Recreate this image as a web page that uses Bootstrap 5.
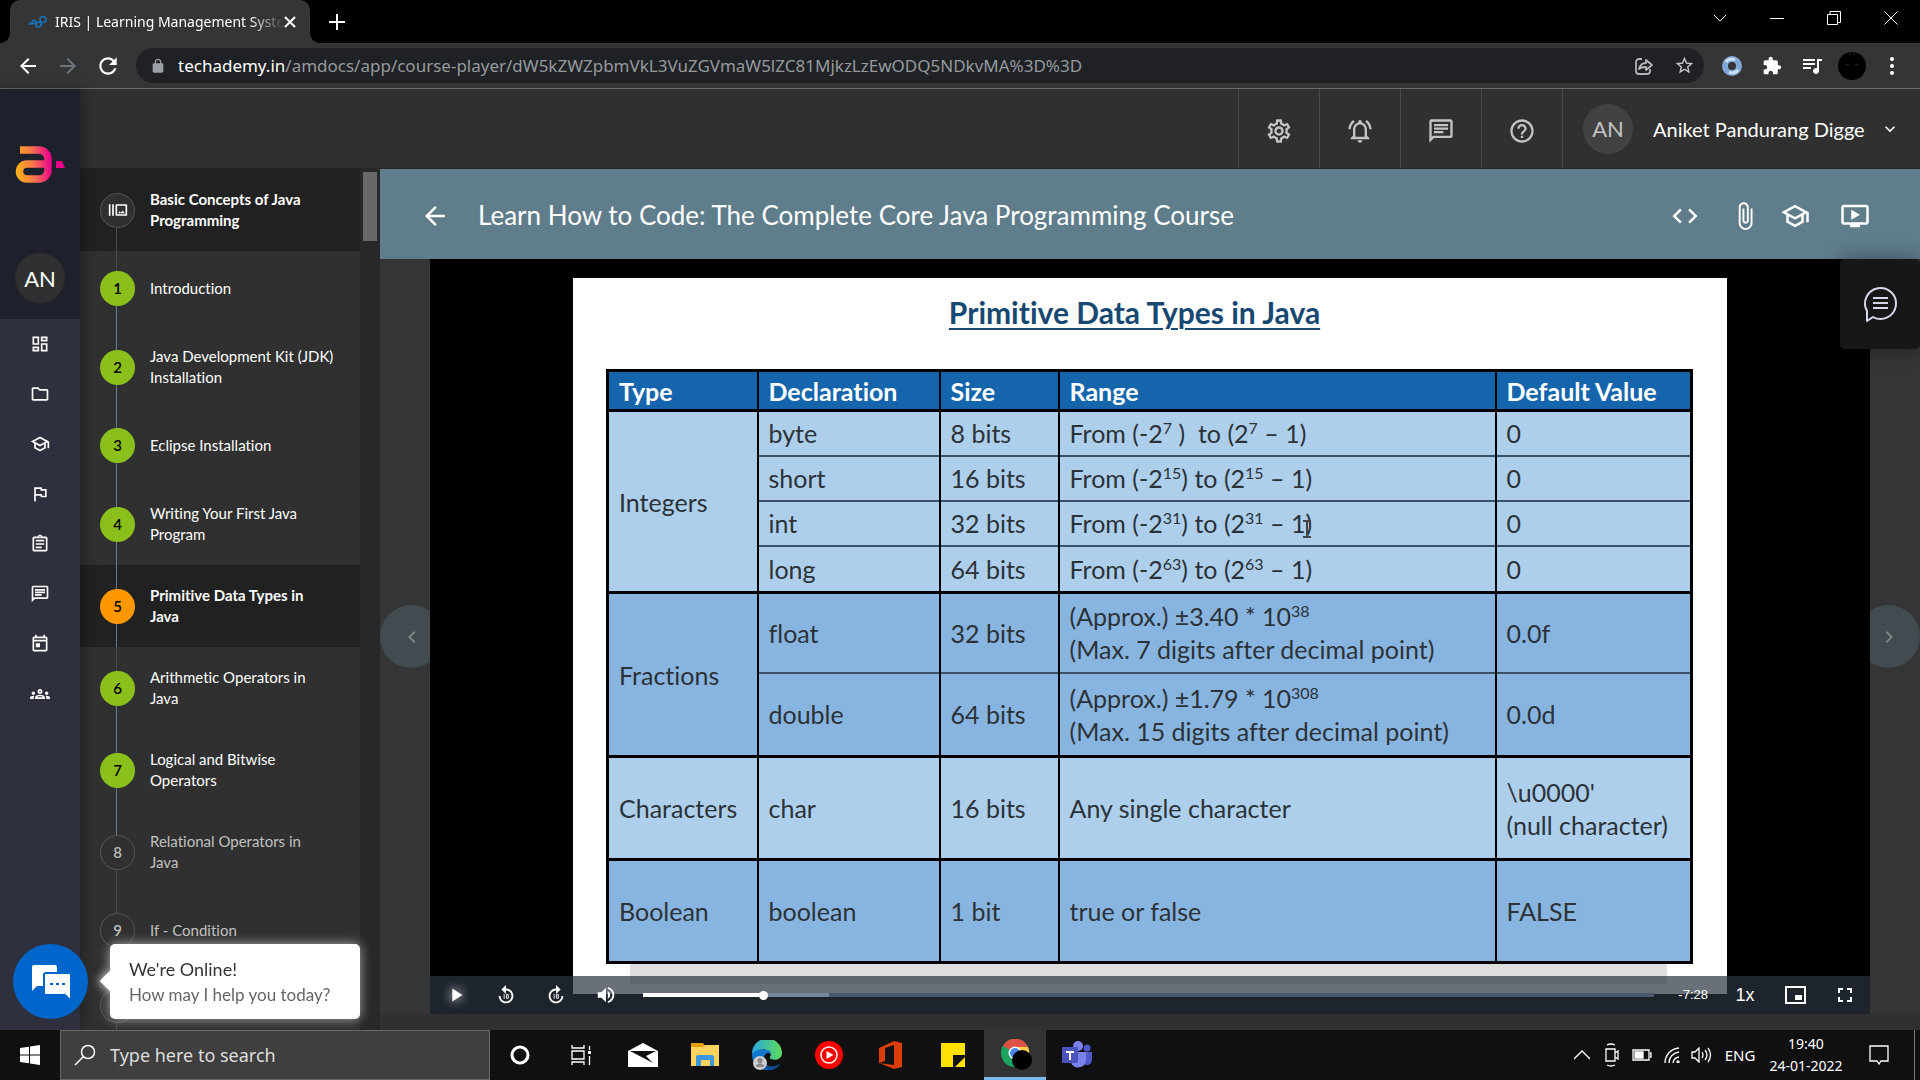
<!DOCTYPE html>
<html lang="en">
<head>
<meta charset="utf-8">
<meta name="viewport" content="width=device-width, initial-scale=1">
<title>IRIS | Learning Management System</title>
<link href="https://cdn.jsdelivr.net/npm/bootstrap@5.3.0/dist/css/bootstrap.min.css" rel="stylesheet">
<style>
  :root { --ui: Lato, "Noto Sans", sans-serif; --win: "Noto Sans", "Open Sans", sans-serif; --slate: #607d8b; --line: #4a4a4a; }
  body { font-family: var(--ui); font-variant-ligatures: none; background: #353535; color: #fff; overflow: hidden; }
  button { color: inherit; background: none; border: 0; padding: 0; font: inherit; }
  a { color: inherit; text-decoration: none; }
  svg { display: block; fill: currentColor; flex: none; }
  .i16 { width: 16px; height: 16px; } .i20 { width: 20px; height: 20px; }
  .i22 { width: 22px; height: 22px; } .i24 { width: 24px; height: 24px; } .i28 { width: 28px; height: 28px; } .i30 { width: 30px; height: 30px; }
  .stroked { fill: none; stroke: currentColor; }
  .cell { display: flex; align-items: center; justify-content: center; flex: none; }

  /* browser frame */
  .tabstrip { height: 43px; background: #000; font-family: var(--win); padding-right: 1px; }
  .browser-tab { position: relative; width: 300px; height: 43px; margin-left: 10px; padding: 0 14px 0 18px; background: #353535; border-radius: 10px 10px 0 0; font-size: 14px; }
  .browser-tab::before, .browser-tab::after { content: ""; position: absolute; bottom: 0; width: 10px; height: 10px; }
  .browser-tab::before { left: -10px; background: radial-gradient(circle at 0 0, transparent 10px, #353535 10px); }
  .browser-tab::after { right: -10px; background: radial-gradient(circle at 100% 0, transparent 10px, #353535 10px); }
  .tab-name { flex: 1; min-width: 0; white-space: nowrap; -webkit-mask-image: linear-gradient(90deg, #000 85%, transparent); mask-image: linear-gradient(90deg, #000 85%, transparent); }
  .winbtn { width: 57px; height: 36px; }
  .newtab { width: 38px; height: 43px; }
  .toolbar { height: 46px; background: #353535; border-bottom: 1px solid #6a6a6a; font-family: var(--win); }
  .toolbar .cell { width: 40px; height: 40px; }
  .address { height: 35px; background: #202124; border-radius: 18px; font-size: 17px; padding-left: 14px; }
  .address input { background: none; border: 0; padding: 0; color: #969a9e; outline: 0; min-width: 0; }

  /* icon rail */
  .rail { width: 80px; background: #2e303d; z-index: 3; box-shadow: 3px 0 12px rgba(0,0,0,.3); }
  .rail-top { height: 230px; background: #1e212b; padding-top: 56px; }
  .initials { width: 50px; height: 50px; border-radius: 50%; font-size: 22px; background: #303030; }
  .rail .cell { height: 50px; }

  /* header */
  .apphead { height: 80px; background: #303030; border-bottom: 1px solid #252525; color: #c4c4c4; }
  .apphead .cell { width: 81px; border-left: 1px solid #4a4a4a; padding-top: 4px; }
  .account { width: 358px; border-left: 1px solid #4a4a4a; padding: 0 20px; }
  .account .initials { background: #424242; }

  /* lessons */
  .lessons { width: 280px; background: #303030; overflow: hidden; font-size: 15px; line-height: 21px; }
  .lesson { position: relative; display: flex; align-items: center; gap: 15px; min-height: 75px; padding: 20px 20px; --up: var(--slate); --down: var(--slate); }
  .lesson::before, .lesson::after { content: ""; position: absolute; left: 36px; width: 1px; height: 50%; }
  .lesson::before { top: 0; background: var(--up); }
  .lesson::after { bottom: 0; background: var(--down); }
  .lesson.current { background: #212121; font-weight: 700; }
  .lesson.todo { color: #c0c0c0; }
  .grey-up { --up: var(--line) !important; } .grey-down { --down: var(--line) !important; } .no-up { --up: transparent !important; }
  .bullet { position: relative; z-index: 1; flex: none; width: 35px; height: 35px; border-radius: 50%; background: #8bc01c; color: #000; font-weight: 600; display: flex; align-items: center; justify-content: center; }
  .bullet.open { background: #303030; border: 1px solid #555; color: #bbb; }
  .bullet.now { background: #ff9800; }
  .scroller { width: 20px; background: #282828; padding: 3px; }
  .scroller div { height: 69px; background: #686868; }

  /* player */
  .coursebar { height: 90px; background: var(--slate); padding: 3px 40px 0; }
  .coursebar h1 { font-size: 26px; font-weight: 400; margin: 0; }
  .coursebar .cell { width: 50px; height: 50px; }
  .coursebar .apart { margin-right: 10px; }
  .stage { position: relative; padding: 0 50px; background: #353535; }
  .pager { position: absolute; top: 346px; width: 63px; height: 63px; border-radius: 50%; background: #424b50; color: #7d8284; }
  .pager.prev { left: 0; } .pager.next { right: 0; }
  .video { position: relative; z-index: 1; height: 755px; background: #000; padding: 19px 143px 0; }
  .slide { position: relative; height: 716px; background: #fff; padding: 11px 34px 0 33px; overflow: hidden; }
  .slide h2 { margin: 0 0 34px; padding-right: 30px; text-align: center; font-size: 30px; line-height: 46px; font-weight: 700; color: #174872; text-decoration: underline; text-decoration-thickness: 2px; text-underline-offset: 4px; }
  .types { width: 100%; table-layout: fixed; border-collapse: collapse; border: 3px solid #000; font-size: 25px; line-height: 33px; color: #2b3238; }
  .types th, .types td { padding: 1px 0 0 10px; border-left: 2px solid #000; border-top: 2px solid #3b5266; white-space: nowrap; vertical-align: middle; }
  .types thead { background: #1565ad; color: #fff; }
  .types th { font-weight: 700; }
  .types tbody { border-top: 3px solid #000; }
  .types tbody tr:first-child > * { border-top: 3px solid #000; }
  .types tbody th { font-weight: 400; }
  .pale { background: #aecfeb; } .deep { background: #88b5e0; }
  .types sup { font-size: 16px; line-height: 0; top: -9px; vertical-align: baseline; }
  .h40 { height: 40px; } .h45 { height: 45px; } .h47 { height: 47px; } .h80 { height: 80px; } .h84 { height: 84px; } .h103 { height: 103px; }
  .understrip { margin: 0 26px 0 24px; height: 20px; background: #dedede; }
  .ibeam { position: absolute; left: 729px; top: 242px; width: 10px; height: 18px; color: #444; }
  .note { position: absolute; z-index: 2; right: 0; top: 0; width: 80px; height: 90px; background: #171717; border-radius: 5px; box-shadow: 0 0 20px rgba(0,0,0,.4); color: #d5d7ea; }
  .controls { position: absolute; left: 0; right: 0; bottom: 0; height: 38px; background: rgba(43,51,63,.7); padding: 0 0 0 1px; font-family: "Liberation Sans", sans-serif; }
  .controls .cell { width: 50px; height: 38px; }
  .controls .remaining { font-size: 13px; margin-right: 12px; }
  .controls .speed { font-size: 18px; }
  .seek { appearance: none; -webkit-appearance: none; flex: 1; min-width: 0; height: 4px; margin: 0 24px 0 12px; outline: 0;
    background: linear-gradient(90deg, #fff var(--played), #73859f var(--played), #73859f var(--loaded), #4b5970 var(--loaded)); }
  .seek::-webkit-slider-thumb { -webkit-appearance: none; width: 9px; height: 9px; border-radius: 50%; background: #fff; }
  .glow { filter: drop-shadow(0 0 6px #fff); }
  .footgap { background: #303030; }

  /* chat widget */
  .chat { position: fixed; left: 13px; bottom: 61px; z-index: 5; gap: 22px; }
  .chat-btn { width: 75px; height: 75px; border-radius: 50%; background: #0066cc; }
  .chat-msg { position: relative; width: 250px; height: 75px; padding: 0 19px; background: #fff; border-radius: 5px; box-shadow: 0 0 12px rgba(255,255,255,.6); color: #333; font-size: 18px; line-height: 25px; }
  .chat-msg::before { content: ""; position: absolute; left: -7px; top: 29px; width: 16px; height: 16px; background: #fff; transform: rotate(45deg); box-shadow: -2px 2px 8px rgba(255,255,255,.6); z-index: -1; }
  .chat-msg div + div { font-size: 17px; color: #666; }

  /* taskbar */
  .taskbar { height: 50px; background: #101010; font-family: var(--win); font-size: 15px; position: relative; z-index: 6; }
  .find { width: 430px; background: #3f3f3f; border: 1px solid #686868; padding-left: 13px; gap: 14px; }
  .find input { flex: 1; min-width: 0; background: none; border: 0; outline: 0; color: #ddd; font-size: 18px; padding: 0; }
  .find input::placeholder { color: #ddd; opacity: 1; }
  .taskbar .cell { width: 62px; height: 50px; }
  .taskbar .cell.launch { width: 60px; }
  .taskbar .cell.active { background: #333; border-bottom: 3px solid #76b9ed; padding: 3px 0 0 4px; }
  .taskbar .tray .cell { width: 30px; }
  .taskbar .tray .lang { width: 46px; }
  .taskbar .tray .alerts { width: 60px; margin-right: 5px; }
  .clock { font-size: 14px; line-height: 22px; width: 86px; text-align: center; }
  .peek { width: 6px; border-left: 1px solid #777; }
</style>
</head>
<body class="vh-100 d-flex flex-column">

<svg width="0" height="0" class="position-absolute" aria-hidden="true"><defs>
  <symbol id="back" viewBox="0 0 24 24"><path d="M20 11H7.83l5.59-5.59L12 4l-8 8 8 8 1.41-1.41L7.83 13H20v-2z"/></symbol>
  <symbol id="chat" viewBox="0 0 24 24"><path d="M4 4h16v12H5.17L4 17.17V4m0-2c-1.1 0-1.99.9-1.99 2L2 22l4-4h14c1.1 0 2-.9 2-2V4c0-1.1-.9-2-2-2H4zm2 10h8v2H6v-2zm0-3h12v2H6V9zm0-3h12v2H6V6z"/></symbol>
  <symbol id="school" viewBox="0 0 24 24"><path d="M12 3L1 9l4 2.18v6L12 21l7-3.82v-6l2-1.09V17h2V9L12 3zm6.82 6L12 12.72 5.18 9 12 5.28 18.82 9zM17 15.99l-5 2.73-5-2.73v-3.72L12 15l5-2.73v3.72z"/></symbol>
</defs></svg>

<!-- Tab strip -->
<div class="tabstrip d-flex flex-shrink-0 align-items-start">
  <div class="browser-tab d-flex align-items-center">
    <svg class="stroked me-2" width="19" height="14" viewBox="0 0 19 14" style="color:#1a73b8" stroke-width="1.500"><path d="M0 9h3l1-2"/><circle cx="6" cy="7" r="1.800"/><circle cx="10.500" cy="9.500" r="2.500"/><circle cx="15" cy="4.500" r="3"/></svg>
    <span class="tab-name">IRIS | Learning Management Syste</span>
    <button aria-label="Close tab"><svg class="stroked" width="12" height="12" viewBox="0 0 12 12" stroke-width="2"><path d="M1 1l10 10M11 1 1 11"/></svg></button>
  </div>
  <button class="cell newtab ms-2" aria-label="New tab"><svg class="stroked i16" viewBox="0 0 16 16" stroke-width="2"><path d="M8 0v16M0 8h16"/></svg></button>
  <div class="ms-auto d-flex">
    <button class="winbtn cell" aria-label="Search tabs"><svg class="stroked" width="14" height="8" viewBox="0 0 14 8"><path d="M1 1l6 6 6-6"/></svg></button>
    <button class="winbtn cell" aria-label="Minimise"><svg class="stroked" width="14" height="14" viewBox="0 0 14 14" stroke-width="1"><path d="M0 7.500h14"/></svg></button>
    <button class="winbtn cell" aria-label="Restore"><svg class="stroked" width="14" height="14" viewBox="0 0 14 14"><path d="M.5 3.500h10v10H.5zM3 3.500V.5h10.500v11H11"/></svg></button>
    <button class="winbtn cell" aria-label="Close"><svg class="stroked" width="14" height="14" viewBox="0 0 14 14"><path d="M.5.5l13 13M13.500.5l-13 13"/></svg></button>
  </div>
</div>

<!-- Toolbar -->
<div class="toolbar d-flex flex-shrink-0 align-items-center ps-2 pe-2">
  <button class="cell" aria-label="Back"><svg class="i24"><use href="#back"/></svg></button>
  <button class="cell text-secondary" aria-label="Forward"><svg class="i24" viewBox="0 0 24 24"><path d="M12 4l-1.410 1.410L16.170 11H4v2h12.170l-5.580 5.590L12 20l8-8z"/></svg></button>
  <button class="cell" aria-label="Reload"><svg width="26" height="26" viewBox="0 0 24 24"><path d="M17.65 6.35C16.2 4.9 14.21 4 12 4c-4.42 0-7.99 3.58-7.99 8s3.57 8 7.99 8c3.73 0 6.84-2.55 7.73-6h-2.080c-.82 2.33-3.04 4-5.650 4-3.31 0-6-2.690-6-6s2.690-6 6-6c1.660 0 3.140.69 4.220 1.780L13 11h7V4l-2.350 2.350z"/></svg></button>
  <div class="address d-flex flex-fill align-items-center ms-2 me-2">
    <svg class="i16 me-2" style="color:#9aa0a6" viewBox="0 0 24 24"><path d="M18 8h-1V6c0-2.760-2.240-5-5-5S7 3.240 7 6v2H6c-1.100 0-2 .9-2 2v10c0 1.100.9 2 2 2h12c1.100 0 2-.9 2-2V10c0-1.100-.9-2-2-2zM9 6c0-1.660 1.340-3 3-3s3 1.340 3 3v2H9z"/></svg>
    <label for="url" class="ms-1">techademy.in</label><input id="url" class="flex-fill" value="/amdocs/app/course-player/dW5kZWZpbmVkL3VuZGVmaW5lZC81MjkzLzEwODQ5NDkvMA%3D%3D">
    <button class="cell" style="color:#b4b6b8" aria-label="Share"><svg class="stroked i20" viewBox="0 0 20 20" stroke-width="1.800"><path d="M8 3H5a3 3 0 0 0-3 3v9a3 3 0 0 0 3 3h8a3 3 0 0 0 3-3v-2"/><path d="M5 13c1-4 3-6 7-6V4l6 5-6 5v-3c-3 0-5 0-7 2z" stroke-linejoin="round"/></svg></button>
    <button class="cell" style="color:#c4c6c8" aria-label="Bookmark"><svg width="21" height="21" viewBox="0 0 24 24"><path d="M22 9.240l-7.190-.62L12 2 9.190 8.630 2 9.240l5.460 4.730L5.820 21 12 17.270 18.180 21l-1.630-7.030L22 9.240zM12 15.400l-3.760 2.270 1-4.280-3.320-2.880 4.380-.38L12 6.100l1.710 4.040 4.380.38-3.320 2.880 1 4.280L12 15.400z"/></svg></button>
  </div>
  <button class="cell" aria-label="Extension"><svg class="i20" viewBox="0 0 20 20"><circle cx="10" cy="10" r="7" fill="none" stroke="#7fa8d8" stroke-width="6"/><path d="M4 6a7 7 0 0 1 9-2M16 14a7 7 0 0 1-9 2" fill="none" stroke="#cfe2f5" stroke-width="3"/></svg></button>
  <button class="cell" aria-label="Extensions"><svg class="i20" viewBox="0 0 24 24"><path d="M20.500 11H19V7c0-1.100-.9-2-2-2h-4V3.500C13 2.120 11.880 1 10.500 1S8 2.120 8 3.500V5H4c-1.100 0-1.990.9-1.990 2v3.800H3.500c1.490 0 2.700 1.210 2.700 2.700s-1.210 2.700-2.700 2.700H2V20c0 1.100.9 2 2 2h3.800v-1.500c0-1.490 1.210-2.700 2.700-2.700 1.490 0 2.700 1.210 2.700 2.700V22H17c1.100 0 2-.9 2-2v-4h1.500c1.380 0 2.500-1.120 2.500-2.500S21.880 11 20.500 11z"/></svg></button>
  <button class="cell" aria-label="Media"><svg class="i24" viewBox="0 0 24 24"><path d="M15 5H3v2h12V5zm0 4H3v2h12V9zM3 15h8v-2H3v2zM17 5v9.180c-.31-.11-.65-.18-1-.18-1.660 0-3 1.340-3 3s1.340 3 3 3 3-1.340 3-3V7h3V5h-5z"/></svg></button>
  <button class="cell" aria-label="Profile"><svg class="i28" viewBox="0 0 28 28"><circle cx="14" cy="14" r="14" fill="#000"/><path d="M8 13l3-1M20 13l-3-1M11 3l2-2M17 3l-2-2" stroke="#222"/></svg></button>
  <button class="cell" aria-label="Menu"><svg width="4" height="18" viewBox="0 0 4 18"><circle cx="2" cy="2" r="2"/><circle cx="2" cy="9" r="2"/><circle cx="2" cy="16" r="2"/></svg></button>
</div>

<div class="d-flex flex-fill" style="min-height:0">
  <!-- Icon rail -->
  <nav class="rail flex-shrink-0 d-flex flex-column" aria-label="Main">
    <div class="rail-top d-flex flex-column align-items-center">
      <svg width="50" height="38" viewBox="0 0 50 38"><defs><linearGradient id="amd" gradientUnits="userSpaceOnUse" x1="0" x2="36" y1="20" y2="16"><stop offset="0" stop-color="#fdb515"/><stop offset=".5" stop-color="#f7744f"/><stop offset="1" stop-color="#ec008c"/></linearGradient></defs>
        <path fill="none" stroke="url(#amd)" stroke-width="7.500" d="M5 5h19a9 9 0 0 1 9 9v11a9 9 0 0 1-9 9H12a7.500 7.500 0 0 1 0-15h20"/><path fill="#ec008c" d="M41 16h6l3 7h-9z"/></svg>
      <div class="initials cell mt-auto mb-3">AN</div>
    </div>
    <a class="cell" href="#" aria-label="Dashboard"><svg class="i20" viewBox="0 0 24 24"><path d="M19 5v2h-4V5h4M9 5v6H5V5h4m10 8v6h-4v-6h4M9 17v2H5v-2h4M21 3h-8v6h8V3zM11 3H3v10h8V3zm10 8h-8v10h8V11zm-10 4H3v6h8v-6z"/></svg></a>
    <a class="cell" href="#" aria-label="Folders"><svg class="i20" viewBox="0 0 24 24"><path d="M9.170 6l2 2H20v10H4V6h5.170M10 4H4c-1.100 0-1.990.9-1.990 2L2 18c0 1.100.9 2 2 2h16c1.100 0 2-.9 2-2V8c0-1.100-.9-2-2-2h-8l-2-2z"/></svg></a>
    <a class="cell" href="#" aria-label="Courses"><svg class="i20"><use href="#school"/></svg></a>
    <a class="cell" href="#" aria-label="Goals"><svg class="i20" viewBox="0 0 24 24"><path d="M12.360 6l.4 2H18v6h-3.360l-.4-2H7V6h5.360M14 4H5v17h2v-7h5.600l.4 2h7V6h-5.600L14 4z"/></svg></a>
    <a class="cell" href="#" aria-label="Assignments"><svg class="i20" viewBox="0 0 24 24"><path d="M7 15h7v2H7zm0-4h10v2H7zm0-4h10v2H7zm12-4h-4.180C14.400 1.840 13.300 1 12 1c-1.300 0-2.400.84-2.820 2H5c-1.100 0-2 .9-2 2v14c0 1.100.9 2 2 2h14c1.100 0 2-.9 2-2V5c0-1.100-.9-2-2-2zm-7-.25c.41 0 .75.34.75.75s-.34.75-.75.75-.75-.34-.75-.75.34-.75.75-.75zM19 19H5V5h14v14z"/></svg></a>
    <a class="cell" href="#" aria-label="Discussions"><svg class="i20"><use href="#chat"/></svg></a>
    <a class="cell" href="#" aria-label="Calendar"><svg class="i20" viewBox="0 0 24 24"><path d="M19 3h-1V1h-2v2H8V1H6v2H5c-1.110 0-1.990.9-1.990 2L3 19c0 1.100.89 2 2 2h14c1.100 0 2-.9 2-2V5c0-1.100-.9-2-2-2zm0 16H5V9h14v10zm0-12H5V5h14v2zM7 11h5v5H7z"/></svg></a>
    <a class="cell" href="#" aria-label="Groups"><svg class="i20" viewBox="0 0 24 24"><path d="M4 13c1.100 0 2-.9 2-2s-.9-2-2-2-2 .9-2 2 .9 2 2 2zm1.130 1.100c-.37-.06-.74-.1-1.130-.1-.99 0-1.930.21-2.780.58C.48 14.900 0 15.620 0 16.430V18h4.500v-1.610c0-.83.23-1.610.63-2.290zM20 13c1.100 0 2-.9 2-2s-.9-2-2-2-2 .9-2 2 .9 2 2 2zm4 3.430c0-.81-.48-1.530-1.220-1.850-.85-.37-1.790-.58-2.780-.58-.39 0-.76.04-1.130.1.4.68.63 1.460.63 2.290V18H24v-1.570zm-7.760-2.780c-1.170-.52-2.610-.9-4.240-.9-1.630 0-3.070.39-4.240.9C6.680 14.130 6 15.210 6 16.390V18h12v-1.610c0-1.180-.68-2.260-1.760-2.740zM8.070 16c.09-.23.13-.39.91-.69.97-.38 1.990-.56 3.020-.56s2.050.18 3.020.56c.77.3.81.46.91.69H8.070zM12 8c.55 0 1 .45 1 1s-.45 1-1 1-1-.45-1-1 .45-1 1-1m0-2c-1.660 0-3 1.340-3 3s1.340 3 3 3 3-1.340 3-3-1.340-3-3-3z"/></svg></a>
  </nav>

  <div class="flex-fill d-flex flex-column" style="min-width:0">
    <!-- Header -->
    <header class="apphead d-flex flex-shrink-0 justify-content-end">
      <button class="cell" aria-label="Settings"><svg class="i28" viewBox="0 0 24 24"><path d="M19.430 12.980c.04-.32.07-.64.07-.98 0-.34-.03-.66-.07-.98l2.110-1.650c.19-.15.24-.42.12-.64l-2-3.460c-.09-.16-.26-.25-.44-.25-.06 0-.12.01-.17.03l-2.490 1c-.52-.4-1.080-.73-1.690-.98l-.38-2.650C14.460 2.180 14.250 2 14 2h-4c-.25 0-.46.18-.49.42l-.38 2.650c-.61.25-1.170.59-1.690.98l-2.490-1c-.06-.02-.12-.03-.18-.03-.17 0-.34.09-.43.25l-2 3.460c-.13.22-.07.49.12.64l2.110 1.650c-.04.32-.07.65-.07.98 0 .33.03.66.07.98l-2.110 1.650c-.19.15-.24.42-.12.64l2 3.460c.09.16.26.25.44.25.06 0 .12-.01.17-.03l2.490-1c.52.4 1.080.73 1.690.98l.38 2.650c.03.24.24.42.49.42h4c.25 0 .46-.18.49-.42l.38-2.650c.61-.25 1.170-.59 1.690-.98l2.490 1c.06.02.12.03.18.03.17 0 .34-.09.43-.25l2-3.460c.12-.22.07-.49-.12-.64l-2.110-1.650zm-1.980-1.710c.04.31.05.52.05.73 0 .21-.02.43-.05.73l-.14 1.130.89.7 1.080.84-.7 1.210-1.270-.51-1.040-.42-.9.68c-.43.32-.84.56-1.250.73l-1.060.43-.16 1.130-.2 1.350h-1.400l-.19-1.350-.16-1.130-1.060-.43c-.43-.18-.83-.41-1.230-.71l-.91-.7-1.060.43-1.270.51-.7-1.210 1.080-.84.89-.7-.14-1.130c-.03-.31-.05-.54-.05-.74s.02-.43.05-.73l.14-1.130-.89-.7-1.080-.84.7-1.210 1.270.51 1.040.42.9-.68c.43-.32.84-.56 1.250-.73l1.060-.43.16-1.130.2-1.350h1.390l.19 1.350.16 1.130 1.060.43c.43.18.83.41 1.230.71l.91.7 1.060-.43 1.270-.51.7 1.210-1.070.85-.89.7.14 1.130zM12 8c-2.210 0-4 1.790-4 4s1.790 4 4 4 4-1.790 4-4-1.790-4-4-4zm0 6c-1.100 0-2-.9-2-2s.9-2 2-2 2 .9 2 2-.9 2-2 2z"/></svg></button>
      <button class="cell" aria-label="Notifications"><svg class="i28" viewBox="0 0 24 24"><path d="M12 22c1.100 0 2-.9 2-2h-4c0 1.100.9 2 2 2zm6-6v-5c0-3.070-1.630-5.640-4.500-6.320V4c0-.83-.67-1.500-1.500-1.500s-1.500.67-1.500 1.500v.68C7.640 5.360 6 7.920 6 11v5l-2 2v1h16v-1l-2-2zm-2 1H8v-6c0-2.480 1.510-4.500 4-4.500s4 2.020 4 4.500v6zM7.580 4.080L6.150 2.650C3.750 4.480 2.170 7.300 2.030 10.500h2c.15-2.650 1.510-4.970 3.550-6.420zm12.390 6.420h2c-.15-3.200-1.730-6.020-4.120-7.850l-1.420 1.430c2.020 1.450 3.390 3.770 3.540 6.420z"/></svg></button>
      <button class="cell" aria-label="Messages"><svg class="i28"><use href="#chat"/></svg></button>
      <button class="cell" aria-label="Help"><svg class="i28" viewBox="0 0 24 24"><path d="M11 18h2v-2h-2v2zm1-16C6.480 2 2 6.480 2 12s4.480 10 10 10 10-4.480 10-10S17.520 2 12 2zm0 18c-4.410 0-8-3.590-8-8s3.590-8 8-8 8 3.590 8 8-3.590 8-8 8zm0-14c-2.210 0-4 1.790-4 4h2c0-1.100.9-2 2-2s2 .9 2 2c0 2-3 1.750-3 5h2c0-2.250 3-2.500 3-5 0-2.210-1.790-4-4-4z"/></svg></button>
      <button class="account d-flex align-items-center">
        <span class="initials d-flex align-items-center justify-content-center">AN</span>
        <span class="ms-3 ps-1 fs-5 text-white flex-fill text-start">Aniket Pandurang Digge</span>
        <svg class="i20 text-white" viewBox="0 0 24 24"><path d="M16.590 8.590L12 13.170 7.410 8.590 6 10l6 6 6-6z"/></svg>
      </button>
    </header>

    <div class="flex-fill d-flex" style="min-height:0">
      <!-- Lessons -->
      <div class="lessons flex-shrink-0">
        <a href="#" class="lesson current no-up grey-down"><span class="bullet open"><svg class="i20 text-white" viewBox="0 0 24 24"><path d="M1 5h2v14H1zm4 0h2v14H5zm17 0H10c-.55 0-1 .45-1 1v12c0 .55.45 1 1 1h12c.55 0 1-.45 1-1V6c0-.55-.45-1-1-1zm-1 12H11V7h10v10zM12 16l2-2.500 1.500 1.700 2-2.700 2.700 3.500z"/></svg></span><span>Basic Concepts of Java Programming</span></a>
        <a href="#" class="lesson grey-up"><span class="bullet">1</span><span>Introduction</span></a>
        <a href="#" class="lesson"><span class="bullet">2</span><span>Java Development Kit (JDK) Installation</span></a>
        <a href="#" class="lesson"><span class="bullet">3</span><span>Eclipse Installation</span></a>
        <a href="#" class="lesson"><span class="bullet">4</span><span>Writing Your First Java Program</span></a>
        <a href="#" class="lesson current"><span class="bullet now">5</span><span>Primitive Data Types in<br>Java</span></a>
        <a href="#" class="lesson grey-up"><span class="bullet">6</span><span>Arithmetic Operators in<br>Java</span></a>
        <a href="#" class="lesson"><span class="bullet">7</span><span>Logical and Bitwise Operators</span></a>
        <a href="#" class="lesson todo grey-down"><span class="bullet open">8</span><span>Relational Operators in<br>Java</span></a>
        <a href="#" class="lesson todo grey-up grey-down"><span class="bullet open">9</span><span>If - Condition</span></a>
        <a href="#" class="lesson todo grey-up grey-down" aria-label="Lesson 10"><span class="bullet open"></span></a>
      </div>
      <div class="scroller flex-shrink-0"><div></div></div>

      <!-- Player -->
      <main class="flex-fill d-flex flex-column" style="min-width:0">
        <div class="coursebar d-flex align-items-center flex-shrink-0">
          <a href="#" class="me-4 pe-1" aria-label="Back to course"><svg class="i30"><use href="#back"/></svg></a>
          <h1 class="flex-fill">Learn How to Code: The Complete Core Java Programming Course</h1>
          <button class="cell apart" aria-label="Code"><svg class="i30" viewBox="0 0 24 24"><path d="M9.400 16.600L4.800 12l4.600-4.600L8 6l-6 6 6 6 1.400-1.400zm5.200 0l4.600-4.600-4.600-4.600L16 6l6 6-6 6-1.400-1.400z"/></svg></button>
          <button class="cell" aria-label="Attachments"><svg class="i30" viewBox="0 0 24 24"><path d="M16.500 6v11.500c0 2.210-1.790 4-4 4s-4-1.790-4-4V5c0-1.380 1.120-2.500 2.500-2.500s2.500 1.120 2.500 2.500v10.500c0 .55-.45 1-1 1s-1-.45-1-1V6H10v9.500c0 1.380 1.120 2.500 2.500 2.500s2.500-1.120 2.500-2.500V5c0-2.210-1.790-4-4-4S7 2.790 7 5v12.500c0 3.040 2.460 5.500 5.500 5.500s5.500-2.460 5.500-5.500V6h-1.500z"/></svg></button>
          <button class="cell apart" aria-label="Assessments"><svg class="i30"><use href="#school"/></svg></button>
          <button class="cell" aria-label="Videos"><svg class="i30" viewBox="0 0 24 24"><path d="M9 7v8l7-4zm12-4H3c-1.110 0-2 .89-2 2v12c0 1.100.89 2 2 2h5v2h8v-2h5c1.100 0 1.990-.9 1.990-2L23 5c0-1.110-.9-2-2-2zm0 14H3V5h18v12z"/></svg></button>
        </div>

        <div class="stage">
          <button class="pager prev cell" aria-label="Previous"><svg class="i24" viewBox="0 0 24 24"><path d="M15.410 7.410L14 6l-6 6 6 6 1.410-1.410L10.830 12z"/></svg></button>
          <button class="pager next cell" aria-label="Next"><svg class="i24" viewBox="0 0 24 24"><path d="M10 6L8.590 7.410 13.170 12l-4.580 4.590L10 18l6-6z"/></svg></button>
          <button class="note cell" aria-label="Notes"><svg class="stroked" width="38" height="38" viewBox="1 0 38 38" stroke-width="2"><path d="M7 36V26A15.500 15.500 0 1 1 13 32z" stroke-linejoin="round"/><path d="M13 13h15M13 18h15M13 23h15"/></svg></button>
          <div class="video">
            <div class="slide">
              <h2>Primitive Data Types in Java</h2>
              <table class="types">
                <colgroup><col style="width:150px"><col style="width:182px"><col style="width:119px"><col><col style="width:196px"></colgroup>
                <thead><tr class="h40"><th>Type</th><th>Declaration</th><th>Size</th><th>Range</th><th>Default Value</th></tr></thead>
                <tbody class="pale">
                  <tr class="h45"><th rowspan="4">Integers</th><td>byte</td><td>8 bits</td><td>From (-2<sup>7</sup> )&nbsp; to (2<sup>7</sup> – 1)</td><td>0</td></tr>
                  <tr class="h45"><td>short</td><td>16 bits</td><td>From (-2<sup>15</sup>) to (2<sup>15</sup> – 1)</td><td>0</td></tr>
                  <tr class="h45"><td>int</td><td>32 bits</td><td>From (-2<sup>31</sup>) to (2<sup>31</sup> – 1)</td><td>0</td></tr>
                  <tr class="h47"><td>long</td><td>64 bits</td><td>From (-2<sup>63</sup>) to (2<sup>63</sup> – 1)</td><td>0</td></tr>
                </tbody>
                <tbody class="deep">
                  <tr class="h80"><th rowspan="2">Fractions</th><td>float</td><td>32 bits</td><td>(Approx.) ±3.40 * 10<sup>38</sup><br>(Max. 7 digits after decimal point)</td><td>0.0f</td></tr>
                  <tr class="h84"><td>double</td><td>64 bits</td><td>(Approx.) ±1.79 * 10<sup>308</sup><br>(Max. 15 digits after decimal point)</td><td>0.0d</td></tr>
                </tbody>
                <tbody class="pale"><tr class="h103"><th>Characters</th><td>char</td><td>16 bits</td><td>Any single character</td><td>\u0000'<br>(null character)</td></tr></tbody>
                <tbody class="deep"><tr class="h103"><th>Boolean</th><td>boolean</td><td>1 bit</td><td>true or false</td><td>FALSE</td></tr></tbody>
              </table>
              <div class="understrip"></div>
              <svg class="ibeam stroked" viewBox="0 0 10 18" stroke-width="2"><path d="M1 1h3l1 1 1-1h3M5 2v14M1 17h3l1-1 1 1h3"/></svg>
            </div>
            <div class="controls d-flex align-items-center">
              <button class="cell" aria-label="Play"><svg class="i22 glow" viewBox="0 0 24 24"><path d="M8 5v14l11-7z"/></svg></button>
              <button class="cell" aria-label="Back 10 seconds"><svg class="i22" viewBox="0 0 24 24"><path d="M12 5V1L7 6l5 5V7c3.310 0 6 2.690 6 6s-2.690 6-6 6-6-2.690-6-6H4c0 4.420 3.580 8 8 8s8-3.580 8-8-3.580-8-8-8z"/><path fill="none" stroke="currentColor" d="M10 11v5M12.500 11.500h2v4h-2z"/></svg></button>
              <button class="cell" aria-label="Forward 10 seconds"><svg class="i22" viewBox="0 0 24 24"><path d="M12 5V1l5 5-5 5V7c-3.310 0-6 2.690-6 6s2.690 6 6 6 6-2.690 6-6h2c0 4.420-3.580 8-8 8s-8-3.580-8-8 3.580-8 8-8z"/><path fill="none" stroke="currentColor" d="M10 11v5M12.500 11.500h2v4h-2z"/></svg></button>
              <button class="cell" aria-label="Volume"><svg class="i22" viewBox="0 0 24 24"><path d="M3 9v6h4l5 5V4L7 9H3zm13.500 3c0-1.770-1.020-3.290-2.500-4.030v8.050c1.480-.73 2.500-2.250 2.500-4.020zM14 3.230v2.060c2.890.86 5 3.540 5 6.710s-2.110 5.850-5 6.710v2.060c4.010-.91 7-4.490 7-8.770s-2.990-7.860-7-8.770z"/></svg></button>
              <input class="seek" type="range" min="0" max="1000" value="116" aria-label="Seek" style="--played:11.8%;--loaded:18.4%">
              <span class="remaining">-7:28</span>
              <button class="cell speed" aria-label="Playback rate">1x</button>
              <button class="cell" aria-label="Picture in picture"><svg width="21" height="18" viewBox="0 0 21 18"><path d="M0 0h21v18H0zM2 2v14h17V2z" fill-rule="evenodd"/><path d="M10 9h7v5h-7z"/></svg></button>
              <button class="cell" aria-label="Full screen"><svg class="i24" viewBox="0 0 24 24"><path d="M7 14H5v5h5v-2H7v-3zm-2-4h2V7h3V5H5v5zm12 7h-3v2h5v-5h-2v3zM14 5v2h3v3h2V5h-5z"/></svg></button>
            </div>
          </div>
        </div>
        <div class="footgap flex-fill"></div>
      </main>
    </div>
  </div>
</div>

<!-- Chat widget -->
<div class="chat d-flex">
  <button class="chat-btn cell" aria-label="Open chat"><svg width="40" height="36" viewBox="0 0 40 36"><path d="M1 3q0-2 2-2h21q2 0 2 2v19H6l-5 5z"/><path d="M15 9h23q2 0 2 2v26l-6-6H15q-2 0-2-2V11q0-2 2-2z" stroke="#0066cc" stroke-width="2"/><path d="M19 19h3v2h-3zM25 19h3v2h-3zM31 19h3v2h-3z" fill="#0066cc"/></svg></button>
  <div class="chat-msg d-flex flex-column justify-content-center"><div>We're Online!</div><div>How may I help you today?</div></div>
</div>

<!-- Taskbar -->
<div class="taskbar d-flex flex-shrink-0">
  <button class="cell launch" aria-label="Start"><svg class="i20" viewBox="0 0 20 20"><path d="M0 3l9-1.300V9.500H0zM10 1.500 20 0v9.500H10zM0 10.500h9v7.800L0 17zM10 10.500h10V20l-10-1.500z"/></svg></button>
  <div class="find d-flex align-items-center">
    <svg class="stroked i22" viewBox="0 0 22 22" stroke-width="1.500"><circle cx="14" cy="8" r="6.500"/><path d="M9.500 12.500 1 21"/></svg>
    <input type="text" placeholder="Type here to search" aria-label="Type here to search">
  </div>
  <button class="cell launch" aria-label="Cortana"><svg class="stroked i20" viewBox="0 0 20 20" stroke-width="3"><circle cx="10" cy="10" r="8"/></svg></button>
  <button class="cell" aria-label="Task view"><svg class="stroked i20" viewBox="0 0 20 20" stroke-width="1.300"><path d="M1 0v3h12V0M1 6h12v8H1zM1 20v-3h12v3M18.500 1v4M18.500 11v9"/><path d="M17 6h3v3h-3z" fill="currentColor" stroke="none"/></svg></button>
  <button class="cell" aria-label="Mail"><svg class="i30" viewBox="0 0 30 24"><path d="M0 8 15 0l15 8v16H0z"/><path d="M2 8h26l-10 5 7 7L2 8z" fill="#101010"/></svg></button>
  <button class="cell" aria-label="Files"><svg class="i28" viewBox="0 0 28 24"><path d="M0 0h12l2 3v6H0z" fill="#e3a008"/><path d="M0 4h12l2-2h14v21H0z" fill="#ffd45e"/><path d="M5 23V14q0-2 2-2h14q2 0 2 2v9h-4v-6h-9v6z" fill="#3a96dd"/></svg></button>
  <button class="cell" aria-label="Edge"><svg class="i30" viewBox="0 0 30 30"><defs><linearGradient id="eg"><stop offset="0" stop-color="#2aa7e0"/><stop offset="1" stop-color="#5fdc5a"/></linearGradient></defs><path d="M0 14A15 15 0 0 1 30 13c0 6-6 8-11 6-2-1-1-2 0-4 0-6-10-8-19-1z" fill="url(#eg)"/><path d="M0 14C5 7 19 8 19 15c-3-5-8 0-7 5 1 8 10 9 16 4-5 7-13 7-18 5C4 27 0 22 0 14z" fill="#1277cf"/><path d="M12 20c1 7 9 8 16 4-4 6-12 7-17 4z" fill="#0c4a94"/><circle cx="8" cy="23" r="7" fill="#ccc"/><circle cx="8" cy="20.500" r="2.500" fill="#888"/><path d="M4 27c0-5 8-5 8 0z" fill="#888"/></svg></button>
  <button class="cell" aria-label="YouTube Music"><svg class="i28" viewBox="0 0 28 28"><circle cx="14" cy="14" r="14" fill="#f00"/><circle cx="14" cy="14" r="8" fill="none" stroke="#fff" stroke-width="1.500"/><path d="M11.500 10v8l7-4z"/></svg></button>
  <button class="cell" aria-label="Office"><svg width="24" height="28" viewBox="0 0 24 28"><path d="M0 7 15 0l8 2v24l-8 2L0 22l15 2V4L6 7v13l-6 2z" fill="#dc3e09"/></svg></button>
  <button class="cell" aria-label="Sticky Notes"><svg class="i24" viewBox="0 0 24 24"><path d="M0 0h24v12H12v12H0z" fill="#ffe100"/><path d="M14 24 24 14v10z" fill="#ffe100"/></svg></button>
  <button class="cell active" aria-label="Chrome"><svg width="32" height="32" viewBox="0 0 32 32"><circle cx="14" cy="14" r="14" fill="#1da462"/><path d="M14 14 2 7a14 14 0 0 1 25 1z" fill="#dd5144"/><path d="M14 8h13a14 14 0 0 1-9 19l-1-13z" fill="#ffcd46"/><circle cx="14" cy="14" r="6.500" fill="#fff"/><circle cx="14" cy="14" r="5" fill="#4a8af4"/><circle cx="21" cy="21" r="10" fill="#000"/></svg></button>
  <button class="cell" aria-label="Teams"><svg class="i30" viewBox="0 0 30 28"><circle cx="25" cy="7" r="3.500" fill="#5059c9"/><path d="M20 11h10v8a5 5 0 0 1-8 4z" fill="#5059c9"/><circle cx="16" cy="5" r="5" fill="#7b83eb"/><path d="M9 11h15v9a8 8 0 0 1-15 2z" fill="#7b83eb"/><rect y="6" width="16" height="16" rx="1" fill="#4b53bc"/><path d="M4 10h8v2H9v7H7v-7H4z"/></svg></button>

  <div class="tray d-flex align-items-center ms-auto">
    <button class="cell" aria-label="Show hidden icons"><svg class="stroked i16" viewBox="0 0 16 16" stroke-width="1.300"><path d="M0 12l8-8 8 8"/></svg></button>
    <button class="cell" aria-label="Meet now"><svg class="stroked" width="16" height="24" viewBox="0 0 16 24" stroke-width="1.300"><path d="M2 6h9v12H2zM11 10l3-2v8l-3-2M3 2q4-2 8 0M3 22q4 2 8 0"/></svg></button>
    <button class="cell" aria-label="Battery"><svg class="stroked" width="20" height="12" viewBox="0 0 20 12" stroke-width="1.300"><path d="M1 1h16v10H1zM18 4h1v4h-1"/><path d="M3 3h8v6H3z" fill="currentColor"/></svg></button>
    <button class="cell" aria-label="Network"><svg class="stroked i16" viewBox="0 0 16 16" stroke-width="1.300"><path d="M1 16A15 15 0 0 1 15 1M5 16A11 11 0 0 1 15 5M9 16a7 7 0 0 1 6-6"/><circle cx="14" cy="15" r="1" fill="currentColor"/></svg></button>
    <button class="cell" aria-label="Sound"><svg class="stroked" width="22" height="16" viewBox="0 0 22 16" stroke-width="1.300"><path d="M1 5h3l4-4v14l-4-4H1zM11 5q2 3 0 6M14 3q4 5 0 10M17 1q5 7 0 14"/></svg></button>
    <button class="cell lang" aria-label="Language">ENG</button>
    <button class="clock">19:40<br>24-01-2022</button>
    <button class="cell alerts" aria-label="Action centre"><svg class="stroked i20" viewBox="0 0 20 20" stroke-width="1.300"><path d="M1 1h18v15h-7l-2 3-2-3H1z"/></svg></button>
    <button class="peek h-100" aria-label="Show desktop"></button>
  </div>
</div>
<script src="https://cdn.jsdelivr.net/npm/bootstrap@5.3.0/dist/js/bootstrap.bundle.min.js"></script>
</body>
</html>
